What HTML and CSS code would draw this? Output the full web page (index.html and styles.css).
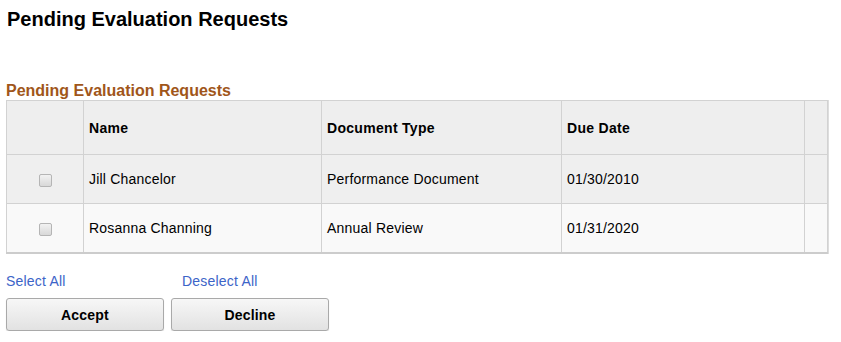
FILE: index.html
```html
<!DOCTYPE html>
<html lang="en">
<head>
  <meta charset="UTF-8">
  <title>Pending Evaluation Requests</title>
  <link rel="stylesheet" href="styles.css">
</head>
<body>
  <h1 class="page-title">Pending Evaluation Requests</h1>

  <div class="grid-section">
    <h2 class="grid-title">Pending Evaluation Requests</h2>
    <table class="grid">
      <thead>
        <tr>
          <th class="col-check"></th>
          <th class="col-name">Name</th>
          <th class="col-doc">Document Type</th>
          <th class="col-date">Due Date</th>
          <th class="col-end"></th>
        </tr>
      </thead>
      <tbody>
        <tr class="row-odd">
          <td class="col-check"><span class="checkbox"></span></td>
          <td>Jill Chancelor</td>
          <td>Performance Document</td>
          <td>01/30/2010</td>
          <td></td>
        </tr>
        <tr class="row-even">
          <td class="col-check"><span class="checkbox"></span></td>
          <td>Rosanna Channing</td>
          <td>Annual Review</td>
          <td>01/31/2020</td>
          <td></td>
        </tr>
      </tbody>
    </table>
  </div>

  <div class="select-links">
    <a href="#" class="link">Select All</a>
    <a href="#" class="link">Deselect All</a>
  </div>

  <div class="actions">
    <button class="btn">Accept</button>
    <button class="btn">Decline</button>
  </div>
</body>
</html>
```

FILE: styles.css
```css
/* Base */
body {
  margin: 0;
  padding: 0 6px;
  font-family: 'Liberation Sans', Arial, sans-serif;
  font-size: 14px;
  letter-spacing: 0.2px;
  color: #000000;
  background-color: #ffffff;
}

/* Page title */
.page-title {
  margin: 0;
  padding: 7px 1px 0;
  font-size: 20px;
  font-weight: bold;
  line-height: 24px;
  letter-spacing: 0;
}

/* Grid */
.grid-section {
  margin-top: 50px;
}

.grid-title {
  margin: 0;
  font-size: 16px;
  font-weight: bold;
  color: #a0561a;
  line-height: 19px;
  letter-spacing: 0;
}

.grid {
  width: 822px;
  border-collapse: collapse;
  border: 1px solid #cccccc;
  border-bottom: 2px solid #cccccc;
  box-shadow: 1px 0 0 #dddddd;
}

.grid th,
.grid td {
  border: 1px solid #d2d2d2;
  padding: 0 5px;
  text-align: left;
  vertical-align: middle;
}

.grid th {
  height: 53px;
  background-color: #eeeeee;
  font-weight: bold;
  letter-spacing: 0.3px;
}

.grid td {
  height: 48px;
}

.row-odd td {
  background-color: #efefef;
}

.row-even td {
  background-color: #f9f9f9;
}

.col-check {
  width: 66px;
  text-align: center !important;
}

.col-name {
  width: 227px;
}

.col-doc {
  width: 229px;
}

.col-date {
  width: 232px;
}

.checkbox {
  display: inline-block;
  width: 11px;
  height: 11px;
  border: 1px solid #b5b5b5;
  border-radius: 2px;
  background: linear-gradient(#f2f2f2, #d8d8d8);
  vertical-align: middle;
}

/* Links */
.select-links {
  display: flex;
  margin-top: 19px;
}

.link {
  color: #3c64c8;
  text-decoration: none;
  line-height: 16px;
}

.link:first-child {
  width: 176px;
}

/* Buttons */
.actions {
  display: flex;
  gap: 7px;
  margin-top: 9px;
}

.btn {
  width: 158px;
  height: 33px;
  font-family: 'Liberation Sans', Arial, sans-serif;
  font-size: 14px;
  font-weight: bold;
  letter-spacing: 0.2px;
  color: #000000;
  border: 1px solid #a9a9a9;
  border-radius: 3px;
  background: linear-gradient(#f7f7f7, #e2e2e2);
  box-shadow: 0 1px 1px rgba(0, 0, 0, 0.15);
  cursor: pointer;
}
```
